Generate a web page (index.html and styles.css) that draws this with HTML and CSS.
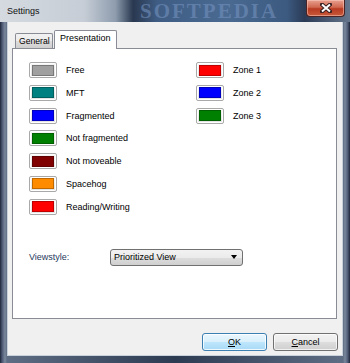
FILE: index.html
```html
<!DOCTYPE html>
<html lang="en">
<head>
    <meta charset="UTF-8">
    <title>Settings</title>
    <link rel="stylesheet" href="styles.css">
</head>
<body>
    <div class="window">
        <div class="titlebar">
            <span class="title">Settings</span>
            <span class="watermark">SOFTPEDIA</span>
            <button class="close" aria-label="Close">
                <svg width="12" height="10" viewBox="0 0 12 10">
                    <path d="M2 1.5 L10 8.5 M10 1.5 L2 8.5" stroke="#3a2020" stroke-width="4" stroke-linecap="square"/>
                    <path d="M2 1.5 L10 8.5 M10 1.5 L2 8.5" stroke="#ffffff" stroke-width="2"/>
                </svg>
            </button>
        </div>

        <div class="client">
            <div class="tabs">
                <div class="tab">General</div>
                <div class="tab active">Presentation</div>
            </div>

            <div class="panel">
                <div class="legend">
                    <div class="legend-col first">
                        <div class="legend-row"><span class="swatch"><i style="background:#a0a0a0"></i></span>Free</div>
                        <div class="legend-row"><span class="swatch"><i style="background:#008080"></i></span>MFT</div>
                        <div class="legend-row"><span class="swatch"><i style="background:#0000ff"></i></span>Fragmented</div>
                        <div class="legend-row"><span class="swatch"><i style="background:#008000"></i></span>Not fragmented</div>
                        <div class="legend-row"><span class="swatch"><i style="background:#800000"></i></span>Not moveable</div>
                        <div class="legend-row"><span class="swatch"><i style="background:#ff8c00"></i></span>Spacehog</div>
                        <div class="legend-row"><span class="swatch"><i style="background:#ff0000"></i></span>Reading/Writing</div>
                    </div>
                    <div class="legend-col">
                        <div class="legend-row"><span class="swatch"><i style="background:#ff0000"></i></span>Zone 1</div>
                        <div class="legend-row"><span class="swatch"><i style="background:#0000ff"></i></span>Zone 2</div>
                        <div class="legend-row"><span class="swatch"><i style="background:#008000"></i></span>Zone 3</div>
                    </div>
                </div>

                <div class="viewstyle">
                    <span class="label">Viewstyle:</span>
                    <div class="combo">
                        <span>Prioritized View</span>
                        <span class="arrow"></span>
                    </div>
                </div>
            </div>

            <div class="buttons">
                <button class="btn default"><u>O</u>K</button>
                <button class="btn"><u>C</u>ancel</button>
            </div>
        </div>
    </div>
</body>
</html>
```

FILE: styles.css
```css
* {
    margin: 0;
    padding: 0;
    box-sizing: border-box;
}

body {
    width: 350px;
    height: 363px;
    overflow: hidden;
    font-family: "Liberation Sans", Arial, sans-serif;
    font-size: 9px;
    color: #000;
    background: #1c2638;
}

.window {
    display: flex;
    flex-direction: column;
    width: 350px;
    height: 363px;
    padding-bottom: 8px;
    background: linear-gradient(to right, #1d2638 0, #4a5670 2px, #7a889c 5px, #5f6d84 7px, #2c3a52 50%, #5f6d84 calc(100% - 7px), #7a889c calc(100% - 5px), #4a5670 calc(100% - 2px), #1d2638 100%);
}

/* title bar */
.titlebar {
    position: relative;
    display: flex;
    align-items: flex-start;
    height: 22px;
    padding: 0 5px 0 7px;
    background: linear-gradient(to right, #d5dae0 0%, #c6cdd6 24%, #8e9cae 33%, #2a3850 38%, #3f5d84 45%, #4a6a92 65%, #3c5a80 82%, #2b3b56 87%, #66768c 100%);
    overflow: hidden;
}

.title {
    margin-top: 6px;
    font-size: 9px;
    color: #101010;
}

.watermark {
    position: absolute;
    left: 140px;
    top: 0;
    line-height: 22px;
    font-family: "Liberation Serif", serif;
    font-weight: bold;
    font-size: 21px;
    letter-spacing: 2px;
    color: rgba(120, 150, 195, 0.55);
}

.close {
    position: relative;
    display: flex;
    align-items: center;
    justify-content: center;
    width: 39px;
    height: 17px;
    margin-left: auto;
    border: 1px solid #4a2424;
    border-top: none;
    border-radius: 0 0 4px 4px;
    background: linear-gradient(#e8a090 0%, #d06850 45%, #b83a22 55%, #c85a3a 100%);
    box-shadow: inset 0 0 0 1px rgba(255, 210, 200, 0.5);
}

/* client area */
.client {
    display: flex;
    flex-direction: column;
    flex-grow: 1;
    margin: 0 8px;
    padding: 8px 4px 4px 4px;
    background-color: #f0f0f0;
    box-shadow: 0 0 0 1px #c9d1db;
}

.tabs {
    display: flex;
    align-items: flex-end;
    height: 18px;
    padding-left: 3px;
    position: relative;
    z-index: 1;
}

.tab {
    width: 38px;
    height: 15px;
    padding: 2px 0 0 3px;
    border: 1px solid #898c95;
    border-bottom: none;
    border-radius: 2px 2px 0 0;
    background: linear-gradient(#f2f2f2 0%, #ebebeb 50%, #dddddd 51%, #cfcfcf 100%);
    color: #000;
    white-space: nowrap;
    font-size: 8.6px;
}

.tab.active {
    width: 63px;
    height: 19px;
    margin-bottom: -1px;
    margin-left: 1px;
    padding: 2px 0 0 5px;
    background: #ffffff;
    font-size: 9px;
}

.panel {
    height: 271px;
    padding: 13px 16px 0 16px;
    background-color: #ffffff;
    border: 1px solid #898c95;
    margin-right: 1px;
}

/* colour legend */
.legend {
    display: flex;
}

.legend-col {
    display: flex;
    flex-direction: column;
    gap: 6.8px;
}

.legend-col.first {
    width: 167px;
}

.legend-row {
    display: flex;
    align-items: center;
    gap: 9px;
    height: 16px;
    white-space: nowrap;
}

.swatch {
    display: flex;
    align-items: center;
    justify-content: center;
    width: 28px;
    height: 16px;
    border: 1px solid #a9a9a9;
    border-radius: 2px;
    background: linear-gradient(#f6f6f6, #e2e2e2);
    box-shadow: inset 0 0 0 1px #ffffff;
}

.swatch i {
    display: block;
    width: 22px;
    height: 11px;
    border: 1px solid rgba(0, 0, 0, 0.25);
}

/* view style */
.viewstyle {
    display: flex;
    align-items: center;
    margin-top: 34px;
}

.viewstyle .label {
    width: 81px;
    color: #1e395b;
}

.combo {
    display: flex;
    align-items: center;
    justify-content: space-between;
    width: 133px;
    height: 17px;
    padding: 0 5px 0 3px;
    border: 1px solid #707070;
    border-radius: 3px;
    background: linear-gradient(#f2f2f2 0%, #ebebeb 50%, #dddddd 51%, #cfcfcf 100%);
}

.arrow {
    width: 0;
    height: 0;
    border-left: 3.5px solid transparent;
    border-right: 3.5px solid transparent;
    border-top: 4px solid #000;
}

/* bottom buttons */
.buttons {
    display: flex;
    justify-content: flex-end;
    gap: 6px;
    margin-top: 14px;
}

.btn {
    width: 65px;
    height: 18px;
    font-family: inherit;
    font-size: 9px;
    color: #000;
    border: 1px solid #707070;
    border-radius: 3px;
    background: linear-gradient(#f2f2f2 0%, #ebebeb 50%, #dddddd 51%, #cfcfcf 100%);
    box-shadow: inset 0 0 0 1px rgba(255, 255, 255, 0.7);
}

.btn.default {
    border-color: #3c7fb1;
    background: linear-gradient(#eaf6fd 0%, #d9f0fc 50%, #bee6fd 51%, #a7d9f5 100%);
    box-shadow: inset 0 0 0 1px rgba(255, 255, 255, 0.8);
}
```
